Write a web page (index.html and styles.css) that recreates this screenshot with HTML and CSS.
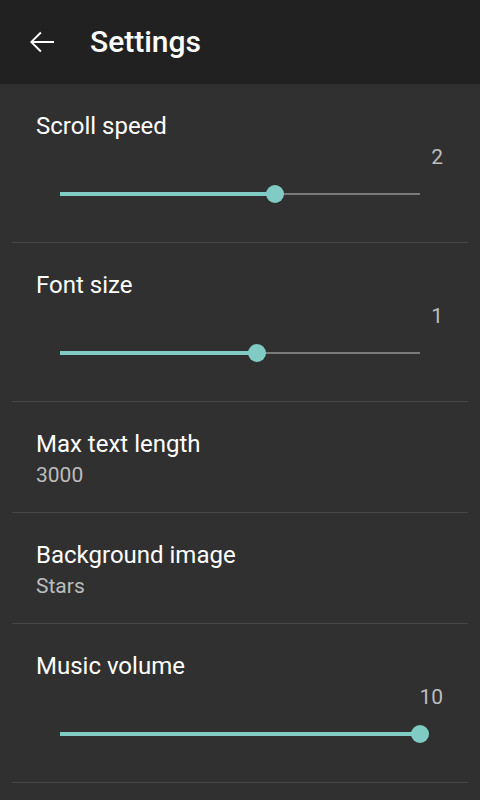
FILE: index.html
```html
<!DOCTYPE html>
<html>
<head>
<meta charset="utf-8">
<link rel="stylesheet" href="styles.css">
</head>
<body>
<header class="toolbar">
  <svg class="back" width="36" height="36" viewBox="0 0 24 24"><path d="M20 11.4H6.4l5.3-5.3-.9-.9L4 12l6.8 6.8.9-.9-5.3-5.3H20z" fill="#fff"/></svg>
  <h1 class="title">Settings</h1>
</header>
<main class="list">
  <section class="pref slider-pref">
    <div class="pref-title">Scroll speed</div>
    <div class="pref-value">2</div>
    <div class="slider"><div class="track"><div class="fill" style="width:215px"></div><div class="thumb" style="left:215px"></div></div></div>
  </section>
  <div class="divider"></div>
  <section class="pref slider-pref">
    <div class="pref-title">Font size</div>
    <div class="pref-value">1</div>
    <div class="slider"><div class="track"><div class="fill" style="width:197px"></div><div class="thumb" style="left:197px"></div></div></div>
  </section>
  <div class="divider"></div>
  <section class="pref text-pref">
    <div class="pref-title">Max text length</div>
    <div class="pref-summary">3000</div>
  </section>
  <div class="divider"></div>
  <section class="pref text-pref">
    <div class="pref-title">Background image</div>
    <div class="pref-summary">Stars</div>
  </section>
  <div class="divider"></div>
  <section class="pref slider-pref">
    <div class="pref-title">Music volume</div>
    <div class="pref-value">10</div>
    <div class="slider"><div class="track"><div class="fill" style="width:360px"></div><div class="thumb" style="left:360px"></div></div></div>
  </section>
  <div class="divider"></div>
</main>
</body>
</html>
```
FILE: styles.css
```css
html, body {
  margin: 0;
  padding: 0;
  background: #303030;
  font-family: Roboto, "Noto Sans", sans-serif;
  color: #fff;
  height: 800px;
  overflow: hidden;
}
.toolbar {
  height: 84px;
  background: #212121;
  display: flex;
  align-items: center;
  padding-left: 24px;
  box-sizing: border-box;
}
.back {
  display: block;
}
.title {
  margin: 0 0 0 30px;
  font-size: 30px;
  font-weight: 500;
  line-height: 34px;
}
.list {
  display: flex;
  flex-direction: column;
}
.pref {
  display: flex;
  flex-direction: column;
  padding-left: 36px;
  padding-right: 37px;
  padding-top: 30px;
}
.slider-pref {
  padding-bottom: 38px;
}
.text-pref {
  padding-bottom: 27px;
}
.pref-title {
  font-size: 24px;
  line-height: 24px;
  color: #fff;
}
.pref-value {
  margin-top: 9px;
  font-size: 21px;
  line-height: 20px;
  color: #bdbdbd;
  text-align: right;
}
.pref-summary {
  margin-top: 9px;
  font-size: 21px;
  line-height: 20px;
  color: #bdbdbd;
}
.slider {
  margin-top: 17px;
  height: 20px;
  display: flex;
  align-items: center;
  padding-left: 24px;
}
.track {
  position: relative;
  width: 360px;
  height: 2px;
  background: #7a7a7a;
}
.fill {
  position: absolute;
  left: 0;
  top: -1px;
  height: 4px;
  background: #80cbc4;
}
.thumb {
  position: absolute;
  top: -8px;
  width: 18px;
  height: 18px;
  margin-left: -9px;
  border-radius: 50%;
  background: #80cbc4;
}
.divider {
  height: 1px;
  background: #484848;
  margin: 0 12px;
}
```
